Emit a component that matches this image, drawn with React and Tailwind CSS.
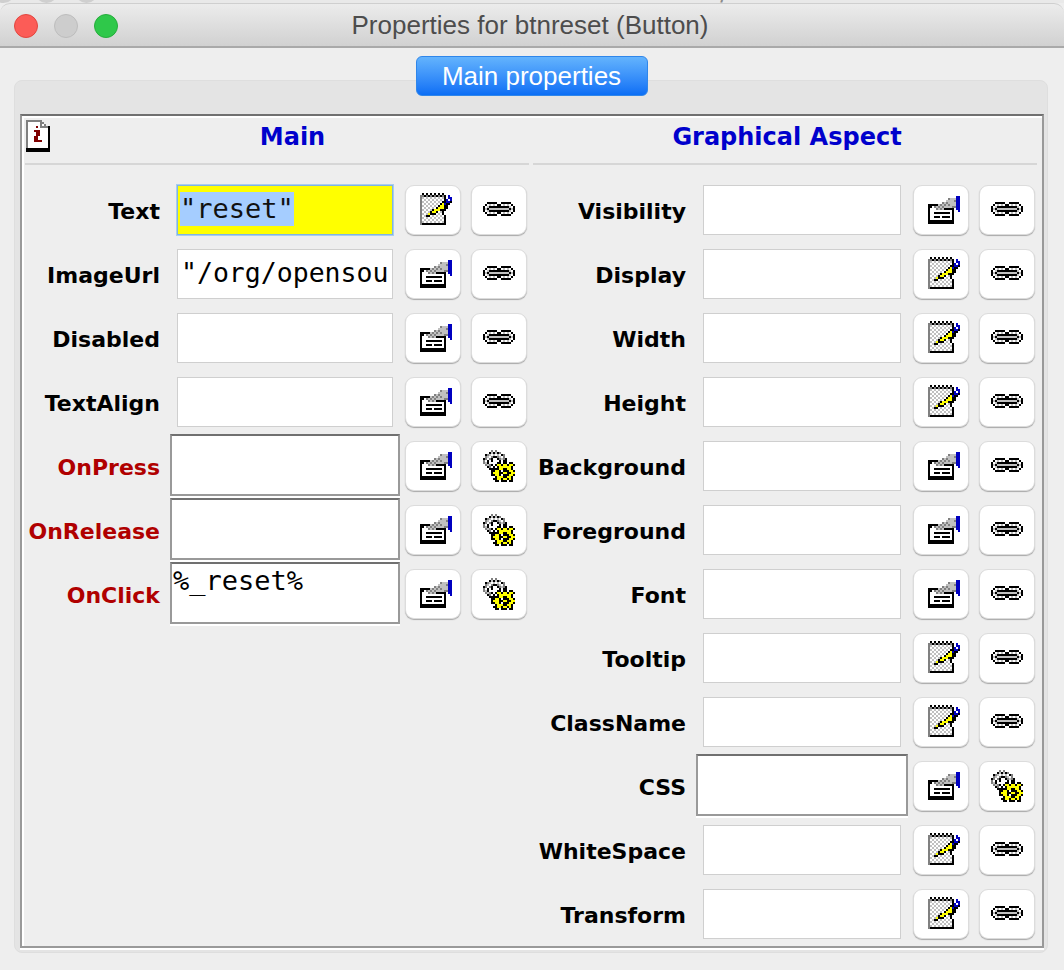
const PALETTE = {
  k: "#000000",
  g: "#808080",
  s: "#c0c0c0",
  w: "#ffffff",
  y: "#ffff00",
  b: "#0000c0",
  r: "#800000",
};

const NOTE = [
  ".k.k.k.k.k.k....",
  "ggkgkgkgkgkgk.b.",
  "gccccccccccck.bb",
  "gccccccccccckbwb",
  "gcccccccccckkbbk",
  "gccccccccckybkk.",
  "gcccccccckyykk..",
  "gccccccckyyykk..",
  "gccccckyyykkk...",
  "gcccckyykwck....",
  "gcccykkkccck....",
  "gcckkccccccck...",
  "gccccccccccck...",
  "gccccccccccck...",
  "gccccccccccck...",
  "gkkkkkkkkkkkk...",
];

// d = dark dither for the hand over the form
const FORM = [
  "..............bb",
  "..........gsssbb",
  ".........dsssgbb",
  ".......ddddsssbb",
  "kkkkkddddddsssbb",
  "kkwddddddsssggbb",
  "kwwwddddkkkkk.bb",
  "kwwwwwwwwwwwk..b",
  "kwwkkkkkkkkwk...",
  "kwwwwwwwwwwwk...",
  "kwwkkkwkkkkwk...",
  "kwwwwwwwwwwwk...",
  "kkkkkkkkkkkkk...",
  "kkkkkkkkkkkkk...",
];

const LINK = [
  "..kkkkk..kkkkk..",
  ".kwswswkkwswswk.",
  "kwskkkkkkkkkkswk",
  "ksk" + "ssssssssss" + "ksk",
  "kwskkkkkkkkkkswk",
  ".kwswswkkwswswk.",
  "..kkkkk..kkkkk..",
];

const GEAR = [
  "....g.g.........",
  "...kckckg.......",
  ".kgcccccckg.....",
  ".gccgkkgccg.....",
  "kgcgk..kgcgk....",
  "gck.k...kckk....",
  "gck....kk.kk.kk.",
  ".gcgk.kyykyykyyk",
  "..kgck.kyyyyyyk.",
  "...kkkkkyykkyyk.",
  "....kkyyk.kkkyyk",
  "....kyyykkyykkyy",
  "....kkyyk.kkkyyk",
  "......kyyykkyyk.",
  ".....kkyykyykyk.",
  "......kk.kkk.kk.",
];

const INFO = [
  "gggggggg....",
  "gwwwwwwgg...",
  "gwwwwwwgwg..",
  "gwwwwrwggggk",
  "gwwwwwwwwwwk",
  "gwwwrrrwwwwk",
  "gwwwwrrwwwwk",
  "gwwwwrrwwwwk",
  "gwwwrrwwwwwk",
  "gwwwrrwwwwwk",
  "gwwwrrrrwwwk",
  "gwwwwwwwwwwk",
  "gwwwwwwwwwwk",
  "gwwwwwwwwwwk",
  "kkkkkkkkkkkk",
  "kkkkkkkkkkkk",
];

// old swing toolbar icons, 16px art shown at 2x
const PixelIcon = ({ rows }) => {
  const w = rows[0].length;
  const h = rows.length;
  const pick = (ch, x, y) => {
    if (ch === "c") return (x + y) % 2 ? "s" : "w";
    if (ch === "d") return (x + y) % 2 ? "s" : "g";
    return ch;
  };
  return (
    <svg width={w * 2} height={h * 2} viewBox={`0 0 ${w} ${h}`} shapeRendering="crispEdges" className="block">
      {rows.flatMap((row, y) =>
        row.split("").map((ch, x) => {
          if (ch === ".") return null;
          return <rect key={`${x}-${y}`} x={x} y={y} width="1" height="1" fill={PALETTE[pick(ch, x, y)]} />;
        })
      )}
    </svg>
  );
};

const IconButton = ({ rows, className }) => (
  <div
    className={`w-[56px] h-[50px] shrink-0 flex items-center justify-center bg-white rounded-[9px] border border-[#dcdcdc] shadow-[0_1px_1px_#a8a8a8] ${className}`}
  >
    <PixelIcon rows={rows} />
  </div>
);

const mono = "font-['DejaVu_Sans_Mono',monospace] text-black whitespace-nowrap overflow-hidden";

const Field = ({ row, slotW, inputW }) => {
  if (row.thick) {
    return (
      <div style={{ width: slotW }} className="shrink-0 flex justify-center">
        <div
          className={`w-full h-[62px] mb-[2px] bg-white border-2 border-[#999] border-t-[#707070] shadow-[0_2px_0_#fff] pl-[1px] text-[27px] leading-[34px] ${mono}`}
        >
          {row.value}
        </div>
      </div>
    );
  }
  if (row.focus) {
    return (
      <div style={{ width: slotW }} className="shrink-0 flex justify-center">
        <div
          style={{ width: inputW }}
          className={`h-[50px] bg-[#ffff00] border border-[#7fb4e4] shadow-[0_0_0_1px_#a9cdee] pl-[2px] pt-[6px] text-[27px] leading-[34px] ${mono}`}
        >
          <span className="inline-block bg-[#a5cdff] text-[#111]">{row.value}</span>
        </div>
      </div>
    );
  }
  return (
    <div style={{ width: slotW }} className="shrink-0 flex justify-center">
      <div
        style={{ width: inputW }}
        className={`h-[50px] bg-white border border-[#cfcfcf] pl-[3px] text-[26.5px] leading-[46px] ${mono}`}
      >
        {row.value}
      </div>
    </div>
  );
};

const Row = ({ row, labelW, slotW, inputW }) => (
  <div className="h-[64px] flex items-center">
    <div
      style={{ width: labelW }}
      className={`shrink-0 pt-[2px] text-right text-[22px] font-bold whitespace-nowrap ${row.red ? "text-[#b00000]" : "text-black"}`}
    >
      {row.label}
    </div>
    <div className="w-[10px] shrink-0" />
    <Field row={row} slotW={slotW} inputW={inputW} />
    <IconButton rows={row.note ? NOTE : FORM} className={row.note ? "ml-[5px] pl-[6px] pb-[3px]" : "ml-[5px] pl-[6px]"} />
    <IconButton
      rows={row.thick ? GEAR : LINK}
      className={row.thick ? "ml-[10px]" : "ml-[10px] pb-[3px]"}
    />
  </div>
);

const mainRows = [
  { label: "Text", value: '"reset"', note: true, focus: true },
  { label: "ImageUrl", value: '"/org/opensou' },
  { label: "Disabled" },
  { label: "TextAlign" },
  { label: "OnPress", red: true, thick: true },
  { label: "OnRelease", red: true, thick: true },
  { label: "OnClick", red: true, thick: true, value: "%_reset%" },
];

const aspectRows = [
  { label: "Visibility" },
  { label: "Display", note: true },
  { label: "Width", note: true },
  { label: "Height", note: true },
  { label: "Background" },
  { label: "Foreground" },
  { label: "Font" },
  { label: "Tooltip", note: true },
  { label: "ClassName", note: true },
  { label: "CSS", thick: true },
  { label: "WhiteSpace", note: true },
  { label: "Transform", note: true },
];

export default function App() {
  return (
    <div className="w-[1064px] h-[970px] overflow-hidden bg-[#eeeeee] font-['DejaVu_Sans',sans-serif]">
      {/* the window behind, only a sliver shows */}
      <div className="relative h-[3px] overflow-hidden bg-[#e9e9e9]">
        <div className="absolute left-[-8px] top-[-20px] w-[23px] h-[23px] rounded-full bg-[#cfcfcf]" />
        <div className="absolute left-[35px] top-[-20px] w-[23px] h-[23px] rounded-full bg-[#cfcfcf]" />
        <div className="absolute left-[75px] top-[-20px] w-[23px] h-[23px] rounded-full bg-[#cfcfcf]" />
        <div className="absolute left-[548px] top-[-22px] text-[24px] leading-[28px] whitespace-nowrap text-[#8a8a8a]">
          ELSS 8.2 &nbsp;&nbsp; full/0.80
        </div>
      </div>

      {/* title bar */}
      <div className="relative h-[45px] rounded-t-[10px] bg-gradient-to-b from-[#ececec] to-[#d1d1d1] border-t border-b-2 border-t-[#cfcfcf] border-b-[#a9a9a9] flex items-center justify-center">
        <div className="absolute left-[14px] top-[10px] flex gap-[16px]">
          <div className="w-[24px] h-[24px] rounded-full bg-[#fc5c57] border border-[#e2463f]" />
          <div className="w-[24px] h-[24px] rounded-full bg-[#cdcdcd] border border-[#bdbdbd]" />
          <div className="w-[24px] h-[24px] rounded-full bg-[#2fc84a] border border-[#25ad3b]" />
        </div>
        <div className="font-['Liberation_Sans',sans-serif] text-[26px] text-[#4d4d4d] pr-[4px]">
          Properties for btnreset (Button)
        </div>
      </div>

      {/* tab */}
      <div className="relative z-10 flex justify-center pt-[8px] pr-[1px]">
        <div className="w-[232px] h-[40px] rounded-[6px] bg-gradient-to-b from-[#63b3fd] to-[#0a6ef5] border border-[#2f86ea] flex items-center justify-center font-['Liberation_Sans',sans-serif] text-[26px] text-white">
          Main properties
        </div>
      </div>

      {/* tabbed pane */}
      <div className="-mt-[16px] ml-[14px] w-[1034px] h-[873px] rounded-[8px] bg-[#e4e4e4] border border-[#dedede] pt-[33px] pl-[5px]">
        <div className="w-[1024px] h-[834px] flex bg-[#eeeeee] border-2 border-[#999] border-t-[#707070] shadow-[inset_2px_2px_0_#fff,0_2px_0_#fff]">
          <div className="w-[508px] shrink-0">
            <div className="h-[47px] ml-[4px] flex items-start">
              <div className="mt-[4px]">
                <PixelIcon rows={INFO} />
              </div>
              <div className="flex-1 h-[42px] pl-[5px] flex items-center justify-center text-[24px] font-bold text-[#0000cc]">
                Main
              </div>
            </div>
            <div className="ml-[3px] w-[504px] h-[2px] bg-[#d6d6d6] mb-[13px]" />
            {mainRows.map((row) => (
              <Row key={row.label} row={row} labelW={138} slotW={230} inputW={216} />
            ))}
          </div>
          <div className="flex-1">
            <div className="h-[47px] flex items-start justify-center pl-[2px]">
              <div className="h-[42px] flex items-center text-[24px] font-bold text-[#0000cc]">Graphical Aspect</div>
            </div>
            <div className="ml-[3px] w-[504px] h-[2px] bg-[#d6d6d6] mb-[13px]" />
            {aspectRows.map((row) => (
              <Row key={row.label} row={row} labelW={156} slotW={212} inputW={198} />
            ))}
          </div>
        </div>
      </div>
    </div>
  );
}
